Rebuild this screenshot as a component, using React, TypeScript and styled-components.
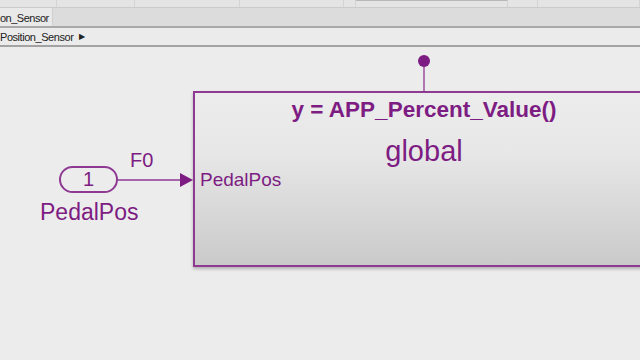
import React from "react";
import styled, { createGlobalStyle } from "styled-components";

const Global = createGlobalStyle`
  html, body { margin: 0; padding: 0; background: #ececec; }
  body { font-family: "Liberation Sans", Arial, sans-serif; }
`;

const PURPLE = "#7d1c82";
const BORDER = "#8e3a93";

const Page = styled.div`
  width: 640px;
  height: 360px;
  display: flex;
  flex-direction: column;
  overflow: hidden;
  background: #ececec;
`;

const ToolStrip = styled.div`
  height: 7px;
  display: flex;
  background: #e4e4e4;
  border-bottom: 1px solid #cbcbcb;
`;

const ToolCell = styled.div<{ $w: number; $line?: boolean }>`
  width: ${(p) => p.$w}px;
  flex: none;
  box-sizing: border-box;
  border-right: 1px solid #d4d4d4;
  ${(p) => (p.$line ? "border-top: 1px solid #b8b8b8;" : "")}
`;

const TabBar = styled.div`
  height: 18px;
  display: flex;
  align-items: stretch;
  background: #dcdcdc;
  border-bottom: 2px solid #a9a9a9;
`;

const Tab = styled.div`
  width: 53px;
  box-sizing: border-box;
  padding-top: 1px;
  background: #e9e9e9;
  border-right: 1px solid #cfcfcf;
  font-size: 11px;
  letter-spacing: -0.5px;
  color: #222;
  line-height: 18px;
  white-space: nowrap;
  overflow: hidden;
`;

const Breadcrumb = styled.div`
  height: 17px;
  display: flex;
  align-items: center;
  gap: 6px;
  background: #ebebeb;
  border-bottom: 2px solid #a3a3a3;
  font-size: 11px;
  letter-spacing: -0.45px;
  color: #222;
  white-space: nowrap;
`;

const Caret = styled.span`
  font-size: 8px;
  color: #222;
`;

const Canvas = styled.div`
  position: relative;
  flex: 1;
  background: #ececec;
  overflow: hidden;
`;

const Wires = styled.svg`
  position: absolute;
  left: 0;
  top: 0;
  width: 640px;
  height: 313px;
  pointer-events: none;
`;

const Block = styled.div`
  position: absolute;
  left: 193px;
  top: 44px;
  width: 462px;
  height: 176px;
  box-sizing: border-box;
  border: 2px solid ${BORDER};
  background: linear-gradient(to bottom, #ececec 0%, #e7e7e7 35%, #cacaca 100%);
  box-shadow: 0 2px 3px rgba(0, 0, 0, 0.25);
  display: flex;
  flex-direction: column;
  align-items: center;
  padding-top: 5px;
  color: ${PURPLE};
`;

const Title = styled.div`
  font-size: 22.5px;
  line-height: 24px;
  font-weight: bold;
  white-space: nowrap;
`;

const Scope = styled.div`
  margin-top: 12px;
  font-size: 29px;
  line-height: 34px;
`;

const PortLabel = styled.div`
  position: absolute;
  left: 5px;
  top: 76px;
  font-size: 19px;
  line-height: 22px;
  color: ${PURPLE};
`;

const Inport = styled.div`
  position: absolute;
  left: 59px;
  top: 119px;
  width: 59px;
  height: 27px;
  box-sizing: border-box;
  border: 2px solid ${BORDER};
  border-radius: 14px;
  display: flex;
  align-items: center;
  justify-content: center;
  font-size: 20px;
  color: ${PURPLE};
`;

const Label = styled.div<{ $x: number; $y: number; $size: number }>`
  position: absolute;
  left: ${(p) => p.$x}px;
  top: ${(p) => p.$y}px;
  font-size: ${(p) => p.$size}px;
  line-height: ${(p) => Math.round(p.$size * 1.2)}px;
  color: ${PURPLE};
  white-space: nowrap;
`;

export default function App() {
  return (
    <>
      <Global />
      <Page>
        <ToolStrip>
          <ToolCell $w={57} />
          <ToolCell $w={78} />
          <ToolCell $w={105} />
          <ToolCell $w={104} />
          <ToolCell $w={12} />
          <ToolCell $w={152} $line />
          <ToolCell $w={30} />
          <ToolCell $w={102} />
        </ToolStrip>
        <TabBar>
          <Tab>on_Sensor</Tab>
        </TabBar>
        <Breadcrumb>
          <span>Position_Sensor</span>
          <Caret>▶</Caret>
        </Breadcrumb>
        <Canvas>
          <Wires viewBox="0 0 640 313">
            <line x1="424" y1="14" x2="424" y2="45" stroke={BORDER} strokeWidth="1.3" />
            <circle cx="424" cy="14" r="6" fill={PURPLE} />
            <line x1="118" y1="133" x2="182" y2="133" stroke={BORDER} strokeWidth="1.3" />
            <polygon points="180,126 193,133 180,140" fill={PURPLE} />
          </Wires>
          <Block>
            <Title>y = APP_Percent_Value()</Title>
            <Scope>global</Scope>
            <PortLabel>PedalPos</PortLabel>
          </Block>
          <Inport>1</Inport>
          <Label $x={130} $y={101} $size={20}>F0</Label>
          <Label $x={40} $y={151} $size={23}>PedalPos</Label>
        </Canvas>
      </Page>
    </>
  );
}
